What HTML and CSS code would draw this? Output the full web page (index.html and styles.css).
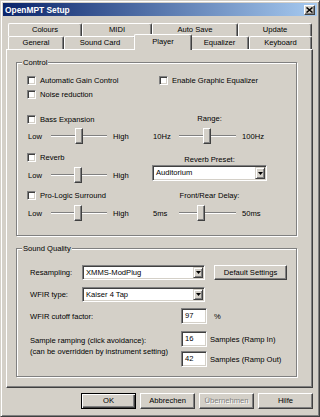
FILE: index.html
```html
<!DOCTYPE html>
<html>
<head>
<meta charset="utf-8">
<title>OpenMPT Setup</title>
<link rel="stylesheet" href="styles.css">
</head>
<body>
<div class="window">
  <div class="titlebar">
    <span class="title">OpenMPT Setup</span>
    <span class="close"><svg width="7" height="6" viewBox="0 0 7 6"><path d="M0.5 0.5 L6.5 5.5 M6.5 0.5 L0.5 5.5" stroke="#000" stroke-width="1.5"/></svg></span>
  </div>
  <div class="client">
    <div class="tabrow back">
      <div class="tab w-colours">Colours</div>
      <div class="tab w-midi">MIDI</div>
      <div class="tab w-autosave">Auto Save</div>
      <div class="tab w-update">Update</div>
    </div>
    <div class="tabrow front">
      <div class="tab w-general">General</div>
      <div class="tab w-soundcard">Sound Card</div>
      <div class="tab active w-player">Player</div>
      <div class="tab w-equalizer">Equalizer</div>
      <div class="tab w-keyboard">Keyboard</div>
    </div>
    <div class="panel">
      <div class="group control">
        <div class="group-title">Control</div>
        <div class="cols">
          <div class="col left">
            <div class="cb-row"><span class="cb"></span><span>Automatic Gain Control</span></div>
            <div class="cb-row"><span class="cb"></span><span>Noise reduction</span></div>
            <div class="cb-row gap-bass"><span class="cb"></span><span>Bass Expansion</span></div>
            <div class="slider gap-s1">
              <span class="s-lo">Low</span>
              <span class="track"><span class="thumb at24"></span></span>
              <span class="s-hi">High</span>
            </div>
            <div class="cb-row gap-reverb"><span class="cb"></span><span>Reverb</span></div>
            <div class="slider gap-s2">
              <span class="s-lo">Low</span>
              <span class="track"><span class="thumb at23"></span></span>
              <span class="s-hi">High</span>
            </div>
            <div class="cb-row gap-pro"><span class="cb"></span><span>Pro-Logic Surround</span></div>
            <div class="slider gap-s2">
              <span class="s-lo">Low</span>
              <span class="track"><span class="thumb at23"></span></span>
              <span class="s-hi">High</span>
            </div>
          </div>
          <div class="col right">
            <div class="cb-row eq"><span class="cb"></span><span>Enable Graphic Equalizer</span></div>
            <div class="center-label range">Range:</div>
            <div class="slider gap-s1">
              <span class="s-lo">10Hz</span>
              <span class="track"><span class="thumb at24"></span></span>
              <span class="s-hi">100Hz</span>
            </div>
            <div class="center-label preset">Reverb Preset:</div>
            <div class="combo">
              <span class="combo-text">Auditorium</span>
              <span class="combo-btn"><svg width="5" height="3" viewBox="0 0 5 3"><polygon points="0,0 5,0 2.5,3" fill="#000"/></svg></span>
            </div>
            <div class="center-label delay">Front/Rear Delay:</div>
            <div class="slider gap-s2">
              <span class="s-lo">5ms</span>
              <span class="track"><span class="thumb at18"></span></span>
              <span class="s-hi">50ms</span>
            </div>
          </div>
        </div>
      </div>
      <div class="group quality">
        <div class="group-title">Sound Quality</div>
        <div class="q-row first">
          <span class="q-lbl">Resampling:</span>
          <div class="combo q-combo">
            <span class="combo-text">XMMS-ModPlug</span>
            <span class="combo-btn"><svg width="5" height="3" viewBox="0 0 5 3"><polygon points="0,0 5,0 2.5,3" fill="#000"/></svg></span>
          </div>
          <span class="btn defaults">Default Settings</span>
        </div>
        <div class="q-row second">
          <span class="q-lbl">WFIR type:</span>
          <div class="combo q-combo">
            <span class="combo-text">Kaiser 4 Tap</span>
            <span class="combo-btn"><svg width="5" height="3" viewBox="0 0 5 3"><polygon points="0,0 5,0 2.5,3" fill="#000"/></svg></span>
          </div>
        </div>
        <div class="q-row third">
          <span class="q-lbl wide">WFIR cutoff factor:</span>
          <span class="edit">97</span>
          <span class="unit pct">%</span>
        </div>
        <div class="ramp">
          <div class="ramp-lbl">Sample ramping (click avoidance):<br>(can be overridden by instrument setting)</div>
          <div class="ramp-fields">
            <div class="ramp-field"><span class="edit">16</span><span class="unit">Samples (Ramp In)</span></div>
            <div class="ramp-field"><span class="edit">42</span><span class="unit">Samples (Ramp Out)</span></div>
          </div>
        </div>
      </div>
    </div>
    <div class="buttons">
      <span class="btn default">OK</span>
      <span class="btn">Abbrechen</span>
      <span class="btn disabled">Übernehmen</span>
      <span class="btn">Hilfe</span>
    </div>
  </div>
</div>
</body>
</html>
```
FILE: styles.css
```css
* { box-sizing: border-box; }
html, body { margin: 0; padding: 0; }
body {
  width: 320px; height: 417px; overflow: hidden;
  background: #d4d0c8;
  font-family: "Liberation Sans", Arial, sans-serif;
  font-size: 7.6px; color: #000;
}
.window {
  width: 320px; height: 417px;
  background: #d4d0c8;
  border: 1px solid; border-color: #d4d0c8 #404040 #404040 #d4d0c8;
  box-shadow: inset 1px 1px #fff, inset -1px -1px #808080;
  padding: 2px;
  display: flex; flex-direction: column;
}
.titlebar {
  flex: none; height: 13px;
  background: linear-gradient(to right, #0a246a, #a6caf0);
  display: flex; align-items: center; justify-content: space-between;
  padding: 0 2px;
}
.title { color: #fff; font-weight: bold; font-size: 8.4px; white-space: nowrap; }
.close {
  width: 11px; height: 10px; background: #d4d0c8;
  border: 1px solid; border-color: #fff #404040 #404040 #fff;
  box-shadow: inset -1px -1px #808080;
  display: flex; align-items: center; justify-content: center;
}
.close svg { display: block; }
.client { padding: 7px 4px 0 3px; }

/* tabs */
.tabrow { display: flex; height: 13px; margin-left: 2px; }
.front { align-items: flex-end; position: relative; z-index: 1; }
.tab {
  flex: none; height: 13px; line-height: 12px; text-align: center; white-space: nowrap;
  background: #d4d0c8;
  border-top: 1px solid #fff; border-left: 1px solid #fff; border-right: 1px solid #404040;
  box-shadow: inset -1px 0 #808080;
  border-radius: 2px 2px 0 0;
}
.tab.active { height: 16px; line-height: 14px; margin: 0 -2px -1px -2px; position: relative; z-index: 2; }
.w-colours { width: 74px; }
.w-midi { width: 70px; }
.w-autosave { width: 86px; }
.w-update { width: 74px; }
.w-general { width: 56px; }
.w-soundcard { width: 72px; }
.w-player { width: 58px; }
.w-equalizer { width: 59px; }
.w-keyboard { width: 63px; }

.panel {
  width: 307px; height: 339px;
  border: 1px solid; border-color: #fff #404040 #404040 #fff;
  box-shadow: inset -1px -1px #808080;
  padding: 12px 0 0 9px;
}

/* group boxes */
.group {
  width: 281px;
  border: 1px solid #808080;
  box-shadow: inset 1px 1px #fff, 1px 1px #fff;
}
.group.control { height: 174px; }
.group.quality { height: 129px; margin-top: 12px; }
.group-title {
  width: fit-content; height: 9px; line-height: 9px;
  margin: -5px 0 0 5px; padding: 0 1px;
  background: #d4d0c8; white-space: nowrap;
}

.cols { display: flex; margin-top: 6px; padding-left: 10px; }
.col { display: flex; flex-direction: column; }
.col.left { width: 125px; }
.col.right { width: 115px; }

.cb-row { display: flex; align-items: center; height: 14px; white-space: nowrap; }
.cb {
  flex: none; width: 9px; height: 9px; margin-right: 4px;
  background: #fff;
  border: 1px solid; border-color: #808080 #fff #fff #808080;
  box-shadow: inset 1px 1px #404040, inset -1px -1px #d4d0c8;
}
.cb-row.eq { padding-left: 7px; }
.gap-bass { margin-top: 11px; }
.gap-reverb { margin-top: 5px; }
.gap-pro { margin-top: 4px; }
.gap-s1 { margin-top: 1px; }
.gap-s2 { margin-top: 2px; }

.slider { display: flex; align-items: center; height: 18px; white-space: nowrap; }
.s-lo { flex: none; width: 24px; padding-left: 1px; }
.right .s-lo { width: 27px; }
.track {
  flex: none; width: 56px; height: 18px;
  display: flex; align-items: center;
  background: linear-gradient(to bottom, transparent 8px, #808080 8px, #808080 9px, #fff 9px, #fff 10px, transparent 10px);
}
.right .track { width: 57px; }
.s-hi { margin-left: 6px; }
.thumb {
  flex: none; width: 8px; height: 16px;
  background: #d4d0c8;
  border: 1px solid; border-color: #fff #404040 #404040 #fff;
  box-shadow: inset -1px -1px #808080;
}
.at24 { margin-left: 24px; }
.at23 { margin-left: 23px; }
.at18 { margin-left: 18px; }

.center-label { text-align: center; white-space: nowrap; }
.range { margin-top: 25px; height: 14px; line-height: 14px; }
.preset { margin-top: 10px; height: 10px; line-height: 10px; }
.delay { margin-top: 9px; height: 12px; line-height: 12px; }

.combo {
  display: flex; height: 16px;
  background: #fff;
  border: 1px solid; border-color: #808080 #fff #fff #808080;
  box-shadow: inset 1px 1px #404040, inset -1px -1px #d4d0c8;
  padding: 1px;
}
.combo-text { flex: 1; padding-left: 2px; line-height: 12px; white-space: nowrap; overflow: hidden; }
.combo-btn {
  flex: none; width: 10px;
  background: #d4d0c8;
  border: 1px solid; border-color: #d4d0c8 #404040 #404040 #d4d0c8;
  box-shadow: inset 1px 1px #fff, inset -1px -1px #808080;
  display: flex; align-items: center; justify-content: center;
}
.combo-btn svg { display: block; }

/* sound quality */
.q-row { display: flex; align-items: center; padding-left: 13px; }
.q-row.first { margin-top: 12px; }
.q-row.second { margin-top: 7px; }
.q-row.third { margin-top: 6px; }
.q-lbl { flex: none; width: 52px; white-space: nowrap; }
.q-lbl.wide { width: 151px; }
.q-combo { width: 123px; height: 15px; }
.q-combo .combo-text { line-height: 11px; }
.edit {
  flex: none; width: 26px; height: 16px;
  background: #fff;
  border: 1px solid; border-color: #808080 #fff #fff #808080;
  box-shadow: inset 1px 1px #404040, inset -1px -1px #d4d0c8;
  padding-left: 3px; line-height: 14px;
}
.unit { margin-left: 3px; white-space: nowrap; }
.unit.pct { margin-left: 7px; }
.ramp { display: flex; padding-left: 13px; margin-top: 7px; }
.ramp-lbl { flex: none; width: 151px; padding-top: 4px; line-height: 11px; white-space: nowrap; }
.ramp-fields { display: flex; flex-direction: column; gap: 4px; }
.ramp-field { display: flex; align-items: center; }

/* buttons */
.btn {
  flex: none; display: block; height: 16px; text-align: center; line-height: 14px; white-space: nowrap;
  background: #d4d0c8;
  border: 1px solid; border-color: #fff #404040 #404040 #fff;
  box-shadow: inset -1px -1px #808080;
}
.btn.defaults { width: 73px; height: 15px; line-height: 13px; margin-left: 9px; }
.buttons { display: flex; justify-content: flex-end; gap: 4px; margin-top: 5px; }
.buttons .btn { width: 55px; }
.btn.default {
  border-color: #000;
  box-shadow: inset 1px 1px #fff, inset -1px -1px #404040, inset -2px -2px #808080;
}
.btn.disabled { color: #808080; text-shadow: 1px 1px #fff; }
```
